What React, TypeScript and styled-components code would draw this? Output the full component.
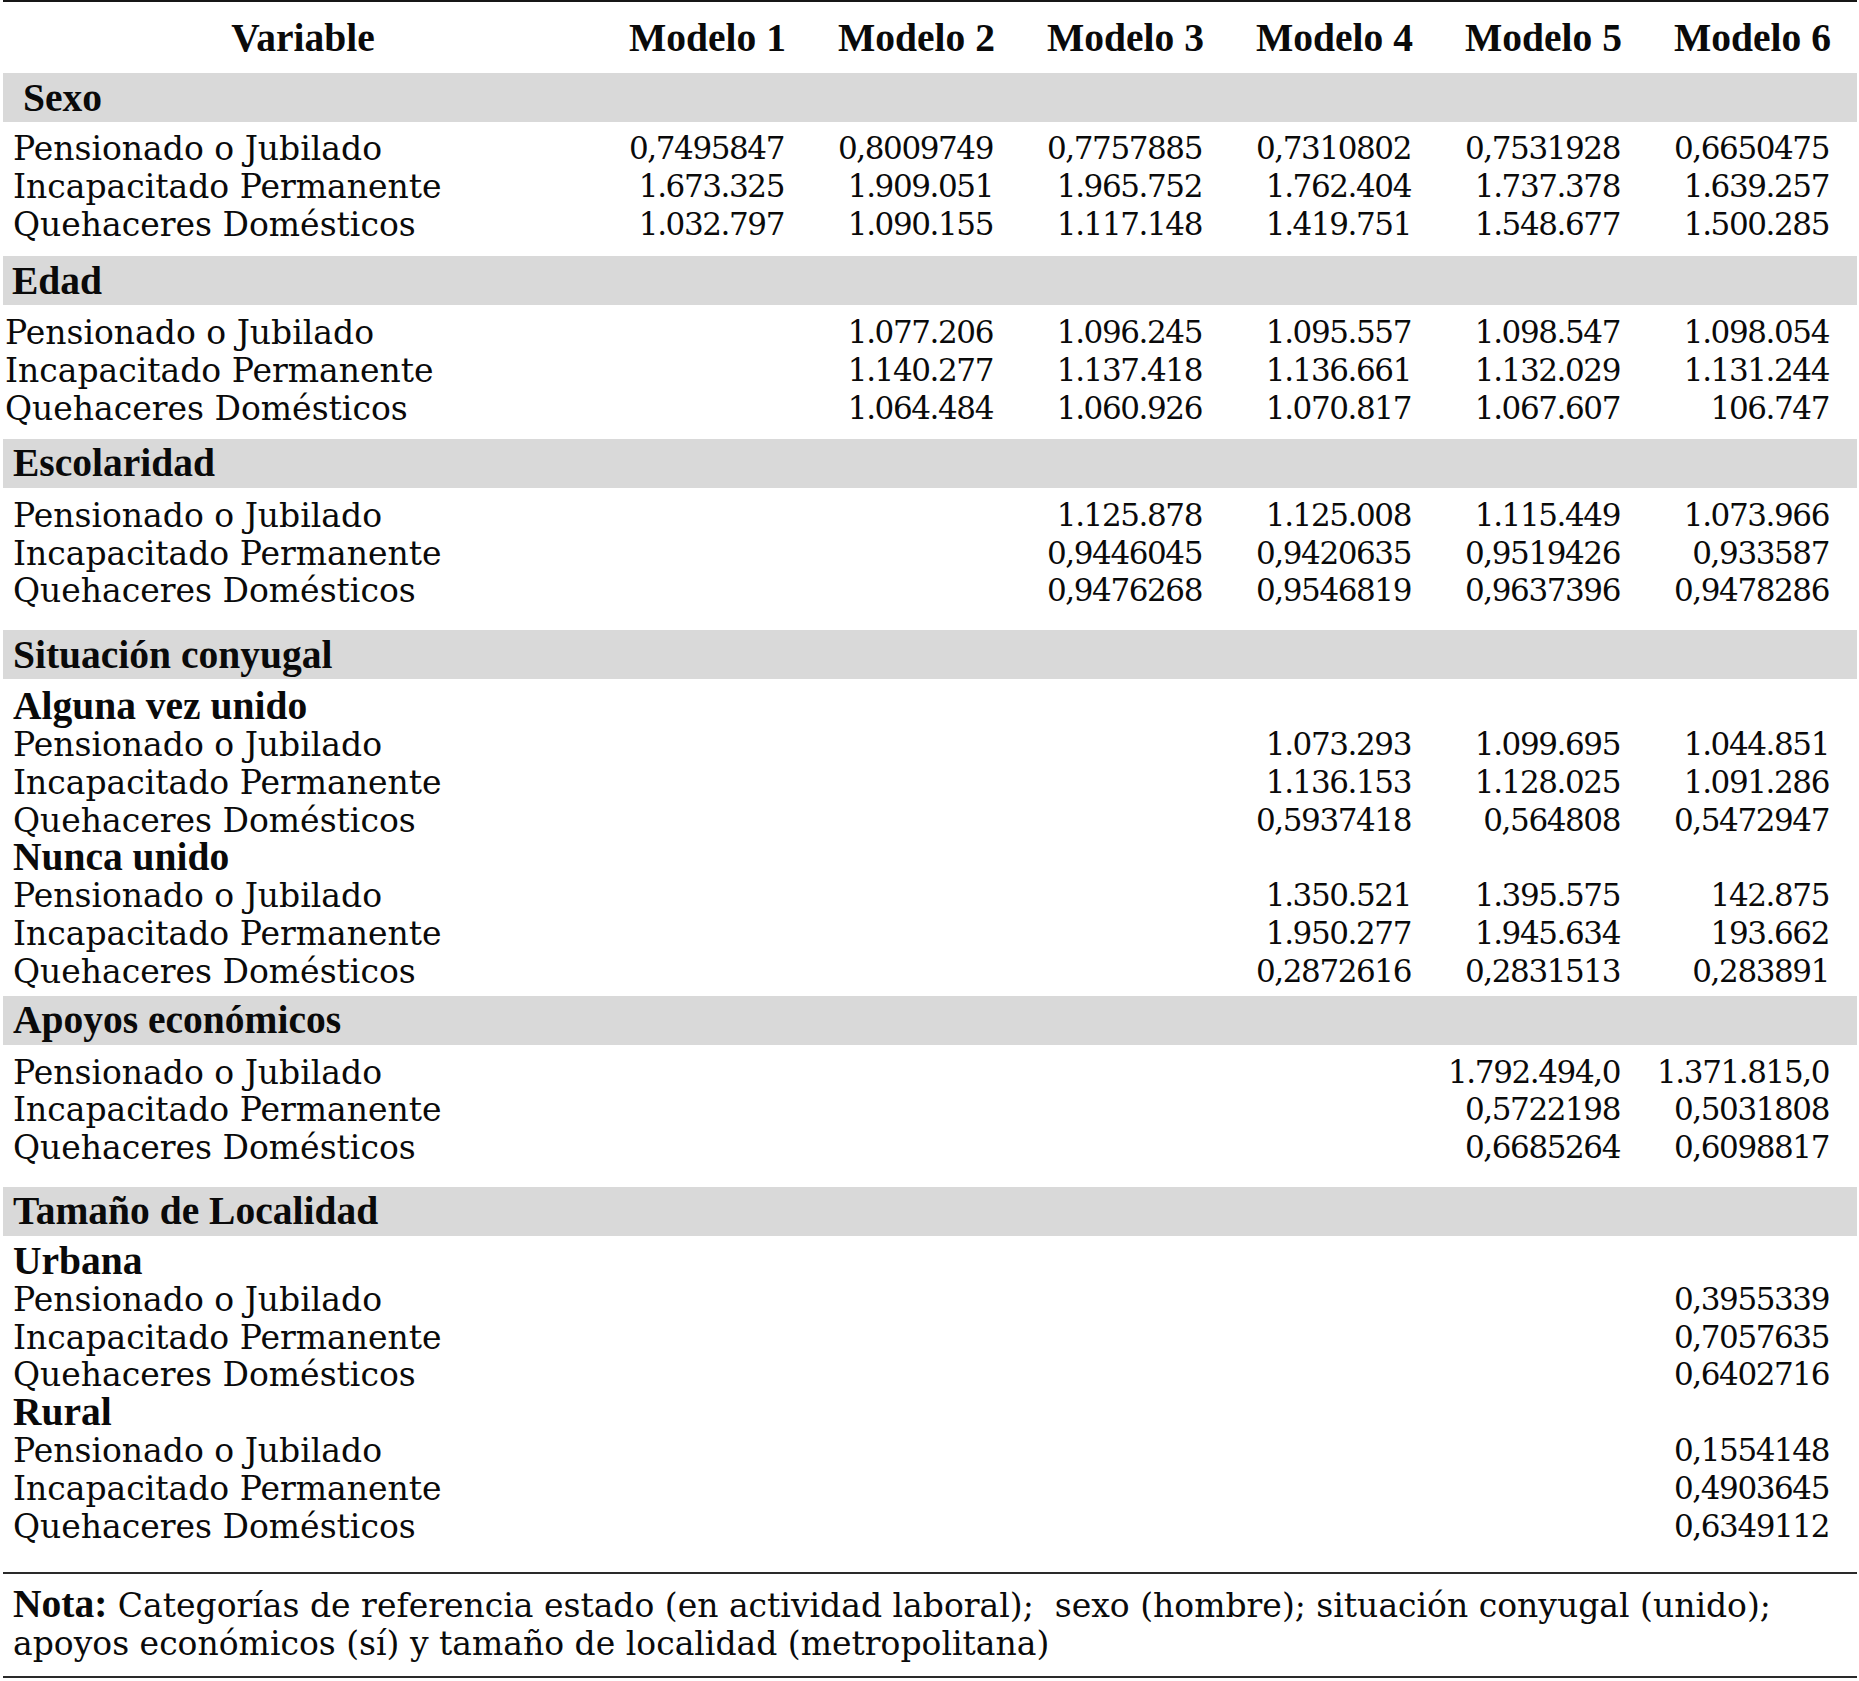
import React from "react";
import styled, { createGlobalStyle } from "styled-components";

const GlobalStyle = createGlobalStyle`
  html, body { margin: 0; padding: 0; background: #ffffff; }
  body { color: #0a0a0a; font-family: "DejaVu Serif", "Liberation Serif", serif; }
`;

const COLS = "600px repeat(6, 209px)";

const Page = styled.div`
  width: 1854px;
  padding: 0 2px 0 3px;
`;

const HeaderRow = styled.div`
  display: grid;
  grid-template-columns: ${COLS};
  height: 71px;
  align-items: center;
  border-top: 2px solid #161616;
  font-family: "Liberation Serif", serif;
  font-weight: 700;
  font-size: 39.5px;
`;

const HeadCell = styled.div`
  text-align: center;
`;

const Band = styled.div<{ $indent: number }>`
  height: 49px;
  display: flex;
  align-items: center;
  padding-left: ${(p) => p.$indent}px;
  background: #d9d9d9;
  font-family: "Liberation Serif", serif;
  font-weight: 700;
  font-size: 39.5px;
`;

const Group = styled.div<{ $padTop: number; $padBottom: number }>`
  padding: ${(p) => p.$padTop}px 0 ${(p) => p.$padBottom}px;
`;

const Row = styled.div`
  display: grid;
  grid-template-columns: ${COLS};
  height: 37.8px;
  align-items: center;
`;

const Label = styled.div<{ $indent: number }>`
  padding-left: ${(p) => p.$indent}px;
  font-size: 33px;
  line-height: 37.8px;
  white-space: nowrap;
`;

const SubLabel = styled.div<{ $indent: number }>`
  padding-left: ${(p) => p.$indent}px;
  font-family: "Liberation Serif", serif;
  font-weight: 700;
  font-size: 39.5px;
  line-height: 37.8px;
  white-space: nowrap;
`;

const Value = styled.div`
  text-align: right;
  padding-right: 28px;
  font-size: 31px;
  letter-spacing: -1.4px;
  line-height: 37.8px;
  white-space: nowrap;
`;

const Rule = styled.div`
  border-top: 2px solid #2a2a2a;
`;

const Note = styled.div`
  padding: 11px 0 13px 10px;
  font-size: 33px;
  line-height: 38px;
  border-bottom: 2px solid #2a2a2a;
`;

const NoteLead = styled.span`
  font-family: "Liberation Serif", serif;
  font-weight: 700;
  font-size: 39.5px;
`;

type Line =
  | { kind: "sub"; text: string }
  | { kind: "data"; label: string; values: string[] };

type Section = {
  title: string;
  titleIndent: number;
  labelIndent: number;
  padTop: number;
  padBottom: number;
  lines: Line[];
};

const P = "Pensionado o Jubilado";
const I = "Incapacitado Permanente";
const Q = "Quehaceres Domésticos";

const pad = (vals: string[]) => [...Array(6 - vals.length).fill(""), ...vals];

const d = (label: string, vals: string[]): Line => ({ kind: "data", label, values: pad(vals) });
const s = (text: string): Line => ({ kind: "sub", text });

const sections: Section[] = [
  {
    title: "Sexo",
    titleIndent: 20,
    labelIndent: 10,
    padTop: 8,
    padBottom: 13,
    lines: [
      d(P, ["0,7495847", "0,8009749", "0,7757885", "0,7310802", "0,7531928", "0,6650475"]),
      d(I, ["1.673.325", "1.909.051", "1.965.752", "1.762.404", "1.737.378", "1.639.257"]),
      d(Q, ["1.032.797", "1.090.155", "1.117.148", "1.419.751", "1.548.677", "1.500.285"]),
    ],
  },
  {
    title: "Edad",
    titleIndent: 9,
    labelIndent: 2,
    padTop: 9,
    padBottom: 11,
    lines: [
      d(P, ["1.077.206", "1.096.245", "1.095.557", "1.098.547", "1.098.054"]),
      d(I, ["1.140.277", "1.137.418", "1.136.661", "1.132.029", "1.131.244"]),
      d(Q, ["1.064.484", "1.060.926", "1.070.817", "1.067.607", "106.747"]),
    ],
  },
  {
    title: "Escolaridad",
    titleIndent: 10,
    labelIndent: 10,
    padTop: 9,
    padBottom: 20,
    lines: [
      d(P, ["1.125.878", "1.125.008", "1.115.449", "1.073.966"]),
      d(I, ["0,9446045", "0,9420635", "0,9519426", "0,933587"]),
      d(Q, ["0,9476268", "0,9546819", "0,9637396", "0,9478286"]),
    ],
  },
  {
    title: "Situación conyugal",
    titleIndent: 10,
    labelIndent: 10,
    padTop: 9,
    padBottom: 5,
    lines: [
      s("Alguna vez unido"),
      d(P, ["1.073.293", "1.099.695", "1.044.851"]),
      d(I, ["1.136.153", "1.128.025", "1.091.286"]),
      d(Q, ["0,5937418", "0,564808", "0,5472947"]),
      s("Nunca unido"),
      d(P, ["1.350.521", "1.395.575", "142.875"]),
      d(I, ["1.950.277", "1.945.634", "193.662"]),
      d(Q, ["0,2872616", "0,2831513", "0,283891"]),
    ],
  },
  {
    title: "Apoyos económicos",
    titleIndent: 10,
    labelIndent: 10,
    padTop: 9,
    padBottom: 20,
    lines: [
      d(P, ["1.792.494,0", "1.371.815,0"]),
      d(I, ["0,5722198", "0,5031808"]),
      d(Q, ["0,6685264", "0,6098817"]),
    ],
  },
  {
    title: "Tamaño de Localidad",
    titleIndent: 10,
    labelIndent: 10,
    padTop: 7,
    padBottom: 27,
    lines: [
      s("Urbana"),
      d(P, ["0,3955339"]),
      d(I, ["0,7057635"]),
      d(Q, ["0,6402716"]),
      s("Rural"),
      d(P, ["0,1554148"]),
      d(I, ["0,4903645"]),
      d(Q, ["0,6349112"]),
    ],
  },
];

const models = ["Modelo 1", "Modelo 2", "Modelo 3", "Modelo 4", "Modelo 5", "Modelo 6"];

export default function App() {
  return (
    <>
      <GlobalStyle />
      <Page>
        <HeaderRow>
          <HeadCell>Variable</HeadCell>
          {models.map((m) => (
            <HeadCell key={m}>{m}</HeadCell>
          ))}
        </HeaderRow>
        {sections.map((sec) => (
          <React.Fragment key={sec.title}>
            <Band $indent={sec.titleIndent}>{sec.title}</Band>
            <Group $padTop={sec.padTop} $padBottom={sec.padBottom}>
              {sec.lines.map((line, i) =>
                line.kind === "sub" ? (
                  <Row key={i}>
                    <SubLabel $indent={sec.labelIndent}>{line.text}</SubLabel>
                  </Row>
                ) : (
                  <Row key={i}>
                    <Label $indent={sec.labelIndent}>{line.label}</Label>
                    {line.values.map((v, j) => (
                      <Value key={j}>{v}</Value>
                    ))}
                  </Row>
                )
              )}
            </Group>
          </React.Fragment>
        ))}
        <Rule />
        <Note>
          <NoteLead>Nota:</NoteLead> Categorías de referencia estado (en actividad laboral);{"\u00a0"} sexo (hombre); situación conyugal (unido);
          <br />
          apoyos económicos (sí) y tamaño de localidad (metropolitana)
        </Note>
      </Page>
    </>
  );
}
